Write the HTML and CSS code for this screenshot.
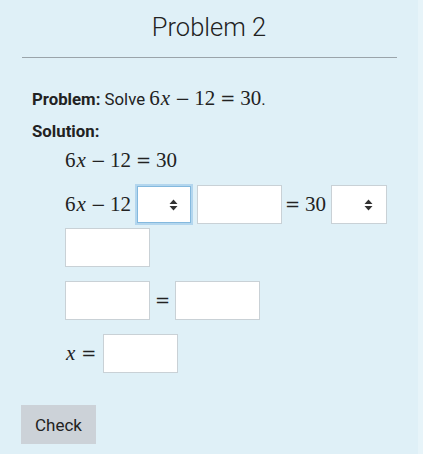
FILE: index.html
```html
<!DOCTYPE html>
<html>
<head>
<meta charset="utf-8">
<link rel="stylesheet" href="styles.css">
</head>
<body>
<div class="page">
  <h1 class="title">Problem 2</h1>
  <hr class="rule">
  <p class="para"><b>Problem:</b> Solve <span class="m">6<i>x</i><span class="op">−</span>12<span class="rel">=</span>30</span>.</p>
  <p class="para sol"><b>Solution:</b></p>
  <div class="work">
    <div class="line first"><span class="m">6<i>x</i><span class="op">−</span>12<span class="rel">=</span>30</span></div>
    <div class="line wrap">
      <span class="m">6<i>x</i><span class="op">−</span>12</span>
      <span class="selwrap"><select class="sel focus"><option></option></select><svg class="arr" width="9" height="12" viewBox="0 0 9 12"><path d="M4.5 0.5 L8.5 5 H0.5 Z M4.5 11.5 L8.5 7 H0.5 Z" fill="#333"/></svg></span>
      <input class="box" type="text">
      <span class="m"><span class="rel lead">=</span>30</span>
      <span class="selwrap"><select class="sel"><option></option></select><svg class="arr" width="9" height="12" viewBox="0 0 9 12"><path d="M4.5 0.5 L8.5 5 H0.5 Z M4.5 11.5 L8.5 7 H0.5 Z" fill="#333"/></svg></span>
      <input class="box" type="text">
    </div>
    <div class="line">
      <input class="box" type="text">
      <span class="m"><span class="rel solo">=</span></span>
      <input class="box" type="text">
    </div>
    <div class="line">
      <span class="m"><i>x</i><span class="rel tail">=</span></span>
      <input class="box narrow" type="text">
    </div>
  </div>
  <button class="btn" type="button">Check</button>
</div>
</body>
</html>
```

FILE: styles.css
```css
html, body {
  margin: 0;
  padding: 0;
}
body {
  background: #e7f4f9;
  font-family: Roboto, "Liberation Sans", sans-serif;
  color: #222;
}
.page {
  width: 418px;
  height: 454px;
  background: #dff0f7;
  box-sizing: border-box;
  padding-top: 11px;
}
.title {
  margin: 0;
  text-align: center;
  font-weight: 300;
  font-size: 25.5px;
  line-height: 32px;
  color: #222;
}
.rule {
  margin: 14px 21px 0 22px;
  border: 0;
  border-top: 1px solid #9aa4aa;
  height: 0;
}
.para {
  margin: 29px 0 0 32px;
  font-size: 16.8px;
  line-height: 22px;
}
.para.sol {
  margin-top: 10px;
}
.m {
  font-family: "Liberation Serif", "DejaVu Serif", serif;
  font-size: 21px;
  white-space: nowrap;
}
.m i {
  font-style: italic;
  margin-left: 1px;
  margin-right: 1px;
}
.op, .rel {
  font-family: "DejaVu Serif", serif;
  font-size: 18px;
  font-weight: 300;
}
.op {
  margin: 0 4px;
}
.rel {
  margin: 0 5px;
}
.rel.lead {
  margin-left: -2px;
  margin-right: 5px;
}
.rel.solo {
  margin: 0;
}
.rel.tail {
  margin-left: 5px;
  margin-right: 2px;
}
.work {
  padding-left: 65px;
  padding-right: 18px;
}
.line {
  display: flex;
  flex-wrap: wrap;
  align-items: center;
  column-gap: 5px;
  row-gap: 4px;
  margin-top: 14px;
}
.line.first {
  margin-top: 6px;
  height: 22px;
}
.line.wrap {
  margin-top: 15px;
}
.selwrap {
  position: relative;
  display: inline-block;
}
.sel {
  appearance: none;
  -webkit-appearance: none;
  display: block;
  width: 56px;
  height: 39px;
  background: #fff;
  border: 1px solid #c9d1d6;
  border-radius: 0;
  margin: 0;
  outline: none;
}
.sel.focus {
  border-color: #84b9de;
  box-shadow: 0 0 0 2px #b3d6ee;
  width: 54px;
  height: 37px;
  margin: 1px;
}
.arr {
  position: absolute;
  right: 14px;
  top: 14px;
  pointer-events: none;
}
.box {
  width: 85px;
  height: 39px;
  box-sizing: border-box;
  border: 1px solid #c9d1d6;
  background: #fff;
  margin: 0;
  padding: 0;
  border-radius: 0;
}
.box.narrow {
  width: 75px;
}
.btn {
  margin: 32px 0 0 21px;
  width: 75px;
  height: 39px;
  background: #ccd2d8;
  border: 0;
  border-radius: 0;
  font-family: Roboto, "Liberation Sans", sans-serif;
  font-size: 17px;
  color: #222;
  padding: 0;
}
```
